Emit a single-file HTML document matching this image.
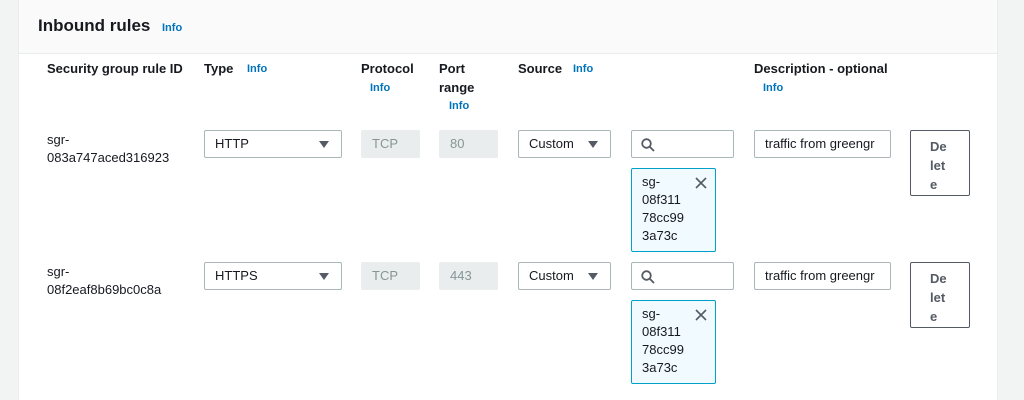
<html style="overflow:hidden;height:400px"><head><style>
body{margin:0;width:1024px;height:400px;background:#f2f3f3;font-family:"Liberation Sans",sans-serif;color:#16191f;position:relative;overflow:hidden}
.p{position:absolute;left:18px;top:-2px;width:978px;height:402px;background:#fff;border:1px solid #eaeded}
.hd{position:absolute;left:19px;top:0;width:978px;height:53px;background:#fafafa;border-bottom:1px solid #eaeded}
.a{position:absolute}
.t{font-size:17px;font-weight:bold;left:38px;top:16px}
.i{color:#0073bb;font-size:11px;font-weight:bold}
.h{font-size:13px;font-weight:bold;line-height:19px}
.tx{font-size:13px;line-height:18px}
.b{border:1px solid #aab7b8;border-radius:2px;background:#fff;box-sizing:border-box;font-size:13px;line-height:26px}
.g{background:#eaeded;border-color:#eaeded;color:#879596;padding-left:10px}
.tri{position:absolute;right:12px;top:10px;width:0;height:0;border-left:5px solid transparent;border-right:5px solid transparent;border-top:7px solid #545b64}
.tok{background:#f1faff;border:1px solid #00a1c9;border-radius:2px;box-sizing:border-box;font-size:13px;line-height:18px;padding:4px 0 0 10px}
.del{border:1px solid #545b64;border-radius:2px;box-sizing:border-box;font-size:13px;font-weight:bold;color:#545b64;line-height:19px;padding:6px 0 0 19px}
</style></head><body>
<div class="p"></div><div class="hd"></div>
<div class="a t">Inbound rules</div><div class="a i" style="left:162px;top:22px">Info</div>
<div class="a h" style="left:47px;top:59px">Security group rule ID</div>
<div class="a h" style="left:204px;top:59px">Type</div><div class="a i" style="left:247px;top:63px">Info</div>
<div class="a h" style="left:361px;top:59px">Protocol</div><div class="a i" style="left:370px;top:82px">Info</div>
<div class="a h" style="left:439px;top:59px">Port<br>range</div><div class="a i" style="left:449px;top:100px">Info</div>
<div class="a h" style="left:518px;top:59px">Source</div><div class="a i" style="left:573px;top:63px">Info</div>
<div class="a h" style="left:754px;top:59px">Description - optional</div><div class="a i" style="left:763px;top:82px">Info</div>

<div class="a tx" style="left:47px;top:131px">sgr-<br>083a747aced316923</div>
<div class="a b" style="left:204px;top:130px;width:138px;height:28px;padding-left:10px">HTTP<span class="tri"></span></div>
<div class="a b g" style="left:361px;top:130px;width:59px;height:28px">TCP</div>
<div class="a b g" style="left:439px;top:130px;width:59px;height:28px">80</div>
<div class="a b" style="left:518px;top:130px;width:93px;height:28px;padding-left:10px">Custom<span class="tri"></span></div>
<div class="a b" style="left:631px;top:130px;width:103px;height:28px"><svg class="a" style="left:9px;top:7px" width="14" height="14" viewBox="0 0 14 14" fill="none" stroke="#545b64" stroke-width="1.8"><circle cx="5.5" cy="5.5" r="4.3"/><path d="M8.6 8.6L13 13"/></svg></div>
<div class="a b" style="left:754px;top:130px;width:137px;height:28px;padding-left:10px">traffic from greengr</div>
<div class="a tok" style="left:631px;top:168px;width:85px;height:84px">sg-<br>08f311<br>78cc99<br>3a73c<svg class="a" style="left:63px;top:8px" width="12" height="12" viewBox="0 0 12 12" stroke="#545b64" stroke-width="1.6"><path d="M1 1L11 11M11 1L1 11"/></svg></div>
<div class="a del" style="left:910px;top:130px;width:60px;height:66px">De<br>let<br>e</div>

<div class="a tx" style="left:47px;top:263px">sgr-<br>08f2eaf8b69bc0c8a</div>
<div class="a b" style="left:204px;top:262px;width:138px;height:28px;padding-left:10px">HTTPS<span class="tri"></span></div>
<div class="a b g" style="left:361px;top:262px;width:59px;height:28px">TCP</div>
<div class="a b g" style="left:439px;top:262px;width:59px;height:28px">443</div>
<div class="a b" style="left:518px;top:262px;width:93px;height:28px;padding-left:10px">Custom<span class="tri"></span></div>
<div class="a b" style="left:631px;top:262px;width:103px;height:28px"><svg class="a" style="left:9px;top:7px" width="14" height="14" viewBox="0 0 14 14" fill="none" stroke="#545b64" stroke-width="1.8"><circle cx="5.5" cy="5.5" r="4.3"/><path d="M8.6 8.6L13 13"/></svg></div>
<div class="a b" style="left:754px;top:262px;width:137px;height:28px;padding-left:10px">traffic from greengr</div>
<div class="a tok" style="left:631px;top:300px;width:85px;height:84px">sg-<br>08f311<br>78cc99<br>3a73c<svg class="a" style="left:63px;top:8px" width="12" height="12" viewBox="0 0 12 12" stroke="#545b64" stroke-width="1.6"><path d="M1 1L11 11M11 1L1 11"/></svg></div>
<div class="a del" style="left:910px;top:262px;width:60px;height:66px">De<br>let<br>e</div>
</body></html>
